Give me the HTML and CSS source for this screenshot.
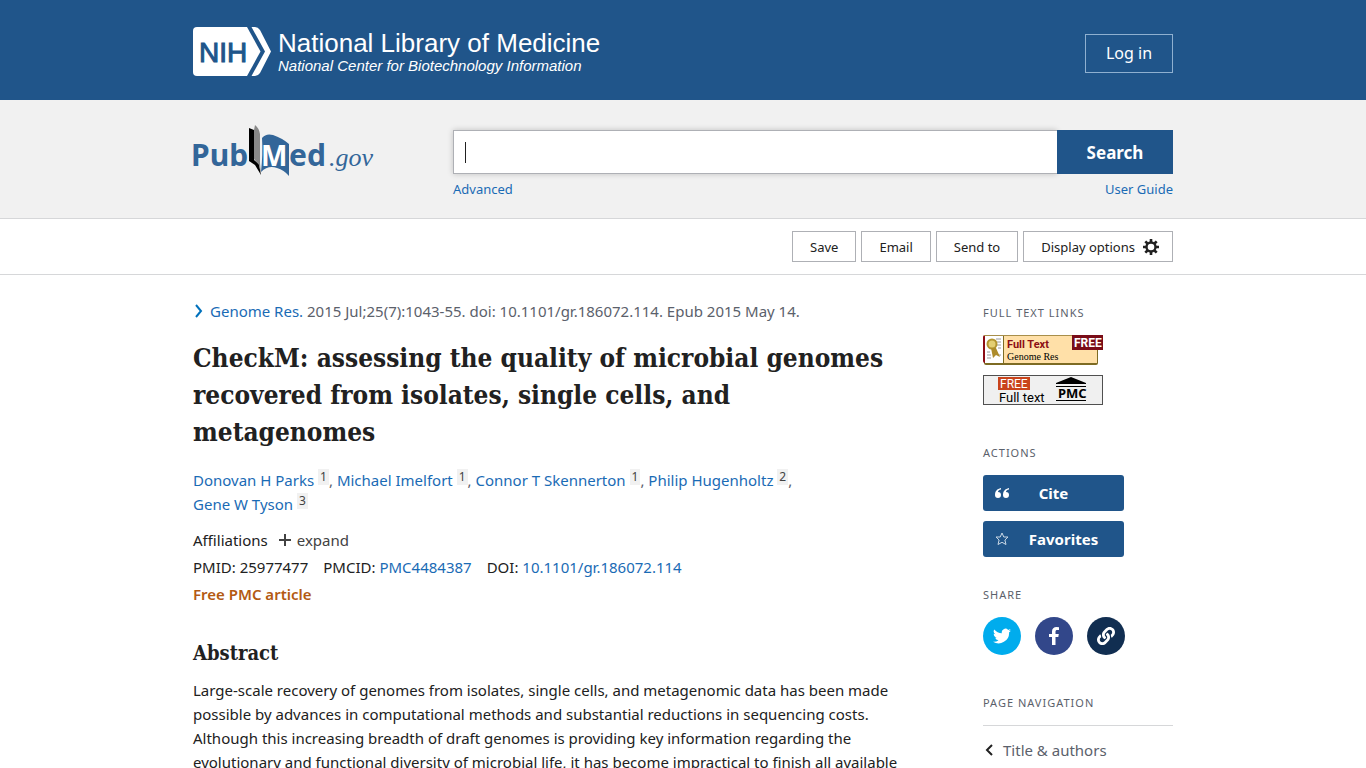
FILE: index.html
```html
<!DOCTYPE html>
<html lang="en">
<head>
<meta charset="utf-8">
<meta name="viewport" content="width=device-width, initial-scale=1">
<title>CheckM: assessing the quality of microbial genomes - PubMed</title>
<link rel="stylesheet" href="styles.css">
</head>
<body>
<header class="ncbi-header">
  <div class="wrap ncbi-row">
    <a class="ncbi-logo" href="#" aria-label="NCBI home">
      <svg class="nih-mark" viewBox="0 0 78 49" width="78" height="49" aria-hidden="true">
        <path fill="#fff" d="M4 0H54L67.500 24.500 54 49H4a4 4 0 0 1-4-4V4a4 4 0 0 1 4-4Z"/>
        <path fill="#fff" d="M58.500 0H62q3 0 5 3L78 24.500 67 46q-2 3-5 3H58.500L72 24.500Z"/>
        <text class="nih-text" x="6" y="35">NIH</text>
      </svg>
      <span class="ncbi-names">
        <span class="ncbi-title">National Library of Medicine</span>
        <span class="ncbi-sub">National Center for Biotechnology Information</span>
      </span>
    </a>
    <button class="login" type="button">Log in</button>
  </div>
</header>

<div class="search-band">
  <div class="wrap search-row">
    <a class="pubmed-logo" href="#" aria-label="PubMed home">
      <svg viewBox="0 0 182 52" width="182" height="52" aria-hidden="true">
        <text class="pm-word" x="-2" y="41">Pub</text>
        <path fill="#000" d="M56 3l5 2v30l5 4 2 11-6-10-6-4Z"/>
        <path fill="#888" d="M61 5l1-5q4 3 5 9v29l1 12-2-10-5-6Z"/>
        <path fill="#336699" d="M69 13q4-5 11-3 9 3 16 9v32q-5-6-12-8-9-3-16 4 2-18 1-34Z"/>
        <text class="pm-m" x="68" y="41">M</text>
        <text class="pm-word" x="96" y="41">ed</text>
        <text class="pm-gov" x="136" y="41">.gov</text>
      </svg>
    </a>
    <form class="search-form">
      <div class="search-line">
        <div class="search-field">
          <input class="search-input" type="text" aria-label="Search PubMed">
          <span class="caret"></span>
        </div>
        <button class="search-btn" type="button">Search</button>
      </div>
      <div class="search-links"><a href="#">Advanced</a><a href="#">User Guide</a></div>
    </form>
  </div>
</div>

<div class="toolbar">
  <div class="wrap toolbar-row">
    <button type="button">Save</button>
    <button type="button">Email</button>
    <button type="button">Send to</button>
    <button type="button" class="display-btn">Display options
      <svg viewBox="0 0 16 16" width="16" height="16" aria-hidden="true"><circle cx="8" cy="8" r="4.500" fill="none" stroke="#212121" stroke-width="2.400"/><path stroke="#212121" stroke-width="2.600" d="M8 0v3M8 13v3M0 8h3M13 8h3M2.300 2.300l2.200 2.200M11.500 11.500l2.200 2.200M2.300 13.700l2.200-2.200M11.500 4.500l2.200-2.200"/></svg>
    </button>
  </div>
</div>

<div class="wrap page">
  <main class="article">
    <p class="citation"><svg viewBox="0 0 10 14" width="10" height="14" aria-hidden="true"><path d="M3 1l5 6-5 6" fill="none" stroke="#0071bc" stroke-width="2"/></svg><span><a href="#">Genome Res.</a> 2015 Jul;25(7):1043-55. doi: 10.1101/gr.186072.114. Epub 2015 May 14.</span></p>
    <h1>CheckM: assessing the quality of microbial genomes recovered from isolates, single cells, and metagenomes</h1>
    <p class="authors"><a href="#">Donovan H Parks</a> <sup>1</sup>, <a href="#">Michael Imelfort</a> <sup>1</sup>, <a href="#">Connor T Skennerton</a> <sup>1</sup>, <a href="#">Philip Hugenholtz</a> <sup>2</sup>, <a href="#">Gene W Tyson</a> <sup>3</sup></p>
    <div class="affil">Affiliations <button type="button" class="expand"><svg viewBox="0 0 12 12" width="12" height="12" aria-hidden="true"><path d="M6 0v12M0 6h12" stroke="#424242" stroke-width="2"/></svg>expand</button></div>
    <div class="ids"><span>PMID: 25977477</span><span>PMCID: <a href="#">PMC4484387</a></span><span>DOI: <a href="#">10.1101/gr.186072.114</a></span></div>
    <div class="free">Free PMC article</div>
    <h2>Abstract</h2>
    <p class="abstract">Large-scale recovery of genomes from isolates, single cells, and metagenomic data has been made possible by advances in computational methods and substantial reductions in sequencing costs. Although this increasing breadth of draft genomes is providing key information regarding the evolutionary and functional diversity of microbial life, it has become impractical to finish all available</p>
  </main>

  <aside class="side">
    <h3>Full text links</h3>
    <a class="ft-link" href="#" aria-label="Full text at Genome Res, free">
      <svg viewBox="0 0 120 30" width="120" height="30" aria-hidden="true">
        <rect x="1" y="1" width="114" height="29" rx="2" fill="#7d6b23"/>
        <rect x="0" y="0" width="20" height="28" rx="2" fill="#8c0d14"/>
        <rect x="2" y="1" width="112" height="27" fill="#ffe0a8"/>
        <rect x="2" y="1" width="18" height="27" fill="#fff"/>
        <path d="M20.500 1v27" stroke="#7d6b23"/><path d="M1 .5H89" stroke="#a88f4b"/>
        <path d="M13 4h5M14 7h4M14 10h4M15 13h3M4 17h3M4 20h4M4 23h4M15 20h3" stroke="#9a9a9a"/>
        <circle cx="9" cy="9" r="4.500" fill="#e4cf73" stroke="#b39530" stroke-width="2"/>
        <path d="M8 13l2 10 3-3 4 2-4-9Z" fill="#ad8c2b"/>
        <text class="ft-title" x="24" y="13">Full Text</text>
        <text class="ft-name" x="24" y="25">Genome Res</text>
        <rect x="89" y="0" width="31" height="15" fill="#790c18"/>
        <text class="ft-free" x="91" y="12">FREE</text>
      </svg>
    </a>
    <a class="ft-link" href="#" aria-label="Free full text at PMC">
      <svg viewBox="0 0 120 30" width="120" height="30" aria-hidden="true">
        <rect x=".5" y=".5" width="119" height="29" fill="#f0f0f0" stroke="#505050"/>
        <rect x="15" y="2" width="32" height="13" fill="#c9441c"/>
        <text class="pmc-free" x="17" y="13">FREE</text>
        <text class="pmc-full" x="16" y="27">Full text</text>
        <path d="M88 2l15 6v1H73V8ZM73 11h30v1H73ZM73 25h30v1H73Z"/>
        <text class="pmc-name" x="75" y="23">PMC</text>
      </svg>
    </a>

    <h3 class="gap-lg">Actions</h3>
    <button type="button" class="action"><svg viewBox="0 0 14 12" width="14" height="12" aria-hidden="true"><path fill="#fff" d="M6 1C2 2 0 4 0 8a3 3 0 1 0 3-3Q3 3 6 2.500ZM14 1c-4 1-6 3-6 7a3 3 0 1 0 3-3q0-2 3-2.500Z"/></svg><span>Cite</span></button>
    <button type="button" class="action favorites"><svg viewBox="0 0 14 14" width="14" height="14" aria-hidden="true"><path fill="none" stroke="#cbd9e6" d="M7 1l1.800 4H13L9.900 8l1.100 4.500L7 10.300 3 12.500 4.100 8 1 5h4.200Z"/></svg><span>Favorites</span></button>

    <h3 class="gap-md">Share</h3>
    <div class="share">
      <a class="tw" href="#" aria-label="Twitter"><svg viewBox="0 0 24 24" width="18" height="18"><path fill="#fff" d="M24 4.600a10 10 0 0 1-2.800.8 5 5 0 0 0 2.100-2.700 10 10 0 0 1-3.100 1.200 4.900 4.900 0 0 0-8.400 4.500A14 14 0 0 1 1.700 3.200a4.900 4.900 0 0 0 1.500 6.500 5 5 0 0 1-2.200-.6 4.900 4.900 0 0 0 3.900 4.900 5 5 0 0 1-2.200.1 4.900 4.900 0 0 0 4.600 3.400A10 10 0 0 1 0 19.500 14 14 0 0 0 21.500 7.100 10 10 0 0 0 24 4.600Z"/></svg></a>
      <a class="fb" href="#" aria-label="Facebook"><svg viewBox="0 0 10 18" width="10" height="18"><path fill="#fff" d="M3 18V10H0V7h3V4.500C3 1.500 4.800 0 7.500 0L10 .2V3H8.300C7 3 6.500 3.700 6.500 4.700V7H9.800l-.5 3H6.500v8Z"/></svg></a>
      <a class="pl" href="#" aria-label="Permalink"><svg viewBox="0 0 512 512" width="18" height="18"><path fill="#fff" d="M326.600 185.400c59.700 59.800 58.900 155.700.4 214.600l-.4.400-67.200 67.200c-59.300 59.300-155.700 59.300-215 0s-59.300-155.700 0-215l37.100-37.100c9.800-9.800 26.800-3.300 27.300 10.600.6 17.700 3.800 35.500 9.700 52.700 2 5.800.6 12.300-3.800 16.600l-13.100 13.100c-28 28-28.900 73.700-1.200 102 28 28.600 74.100 28.700 102.300.5l67.200-67.200c28.200-28.200 28.100-73.800 0-101.800-3.700-3.700-7.400-6.600-10.300-8.600a16 16 0 0 1-6.900-12.600c-.4-10.600 3.300-21.500 11.700-29.800l21.100-21.100c5.500-5.500 14.200-6.200 20.600-1.700a152 152 0 0 1 20.500 17.200ZM467.500 44.400c-59.300-59.300-155.700-59.300-215 0l-67.200 67.200-.4.400c-58.600 58.900-59.400 154.800.4 214.600a152 152 0 0 0 20.500 17.200c6.400 4.500 15.100 3.800 20.600-1.700l21.100-21.100c8.400-8.300 12.100-19.200 11.700-29.800a16 16 0 0 0-6.900-12.600c-2.900-2-6.600-4.900-10.300-8.600-28.100-28-28.200-73.600 0-101.800l67.200-67.200c28.200-28.200 74.300-28.100 102.300.5 27.800 28.300 26.900 74-1.200 102l-13.100 13.100c-4.400 4.400-5.800 10.800-3.800 16.600 5.900 17.200 9 35 9.700 52.700.5 13.900 17.500 20.400 27.300 10.600l37.100-37.100c59.300-59.300 59.300-155.700 0-215Z"/></svg></a>
    </div>

    <h3 class="gap-lg">Page navigation</h3>
    <nav class="page-nav"><a href="#"><svg viewBox="0 0 8 12" width="8" height="12" aria-hidden="true"><path d="M7 1L2 6l5 5" fill="none" stroke="#212121" stroke-width="2"/></svg>Title &amp; authors</a></nav>
  </aside>
</div>
</body>
</html>
```

FILE: styles.css
```css
* { box-sizing: border-box; }
body {
  margin: 0;
  height: 100vh;
  overflow: hidden;
  background: #fff;
  color: #212121;
  font: 15px/24px "Noto Sans", "Open Sans", sans-serif;
}
a { color: #1a6bb5; text-decoration: none; }
button { font-family: inherit; cursor: pointer; }
p, h1, h2, h3 { margin: 0; }
svg { display: block; flex: none; }
.wrap { max-width: 1020px; margin: 0 auto; padding: 0 20px; }

.ncbi-header { background: #20558a; }
.ncbi-row { display: flex; align-items: center; justify-content: space-between; min-height: 100px; padding-top: 6px; }
.ncbi-logo { display: flex; align-items: center; gap: 7px; color: #fff; font-family: "Liberation Sans", Arial, sans-serif; margin-top: -3px; }
.nih-text { font: 28px "Liberation Sans", Arial, sans-serif; fill: #20558a; stroke: #20558a; stroke-width: 1px; }
.ncbi-names { display: flex; flex-direction: column; }
.ncbi-title { font-size: 26px; line-height: 28px; }
.ncbi-sub { font-size: 15px; line-height: 18px; font-style: italic; }
.login { min-width: 88px; height: 39px; border: 1px solid #8fb0d0; background: transparent; color: #fff; font-size: 16px; }

.search-band { background: #f1f1f1; border-bottom: 1px solid #d6d7d9; }
.search-row { display: flex; justify-content: space-between; padding-top: 25px; padding-bottom: 18px; }
.pubmed-logo { width: 260px; }
.pubmed-logo svg { overflow: visible; }
.pm-word { font: bold 30px "Noto Sans", sans-serif; fill: #336699; }
.pm-m { font: bold 28px "Noto Sans", sans-serif; fill: #fff; }
.pm-gov { font: italic 26px "Liberation Serif", serif; fill: #336699; }
.search-form { flex: 1; padding-top: 5px; }
.search-line { display: flex; height: 44px; }
.search-field { flex: 1; display: flex; position: relative; }
.search-input { flex: 1; min-width: 0; border: 1px solid #aeb0b5; border-right: 0; padding: 0 11px; font: 18px "Noto Sans", sans-serif; background: #fff; box-shadow: 0 0 6px rgba(0, 0, 0, .2); outline: 0; }
.caret { position: absolute; left: 12px; top: 12px; width: 1px; height: 21px; background: #212121; }
.search-btn { width: 116px; border: 0; background: #20558a; color: #fff; font-size: 17px; font-weight: 700; position: relative; }
.search-links { display: flex; justify-content: space-between; padding-top: 5px; font-size: 13px; line-height: 21px; }

.toolbar { border-bottom: 1px solid #d6d7d9; padding: 12px 0; }
.toolbar-row { display: flex; justify-content: flex-end; gap: 5px; }
.toolbar button { height: 31px; padding: 0 17px; border: 1px solid #aeb0b5; background: #fff; color: #212121; font-size: 13px; }
.toolbar .display-btn { display: flex; align-items: center; gap: 8px; padding-right: 13px; }

.page { display: flex; justify-content: space-between; padding-top: 24px; }
.article { width: 711px; }
.citation { display: flex; align-items: center; gap: 7px; color: #5b616b; }
h1 { font: bold 26px/37px "DejaVu Serif Condensed", "DejaVu Serif", serif; padding-top: 17px; }
.authors { padding: 17px 90px 0 0; color: #5b616b; }
sup { display: inline-block; background: #f1f1f1; color: #424242; font-size: 12px; line-height: 16px; padding: 0 2px; vertical-align: 5px; }
.affil { padding-top: 12px; display: flex; gap: 11px; }
.expand { display: flex; align-items: center; gap: 6px; border: 0; padding: 0; background: none; color: #424242; font-size: 15px; line-height: 24px; }
.ids { display: flex; gap: 15px; padding-top: 3px; }
.free { padding-top: 3px; color: #b35a12; font-weight: 600; }
h2 { font: bold 20px/28px "DejaVu Serif Condensed", "DejaVu Serif", serif; padding: 33px 0 11px; }

.side { width: 190px; padding-top: 4px; }
h3 { font-size: 11px; line-height: 20px; font-weight: 400; letter-spacing: 1px; text-transform: uppercase; color: #5b616b; margin-bottom: 12px; }
.ft-link { display: block; margin-bottom: 10px; }
.ft-title { font: bold 11px Roboto, sans-serif; fill: #8c0d14; }
.ft-name { font: 10px "Liberation Serif", serif; }
.ft-free { font: bold 12px Roboto, sans-serif; fill: #fff; }
.pmc-free { font: 12px Roboto, sans-serif; fill: #fff; }
.pmc-full { font: 13px Roboto, sans-serif; }
.pmc-name { font: bold 13px "Noto Sans", sans-serif; }
.gap-lg { margin-top: 38px; }
.gap-md { margin-top: 28px; }
.action { display: flex; align-items: center; width: 141px; height: 36px; margin-bottom: 10px; padding: 0 26px 0 12px; border: 0; border-radius: 3px; background: #20558a; color: #fff; font-size: 15px; font-weight: 700; }
.action span { flex: 1; text-align: center; }
.favorites { padding-right: 6px; }
.share { display: flex; gap: 14px; }
.share a { width: 38px; height: 38px; border-radius: 50%; display: flex; align-items: center; justify-content: center; }
.tw { background: #00aced; }
.fb { background: #32478a; }
.pl { background: #112e51; }
.page-nav { border-top: 1px solid #d6d7d9; padding: 12px 2px; }
.page-nav a { display: flex; align-items: center; gap: 10px; color: #5b616b; }
```
